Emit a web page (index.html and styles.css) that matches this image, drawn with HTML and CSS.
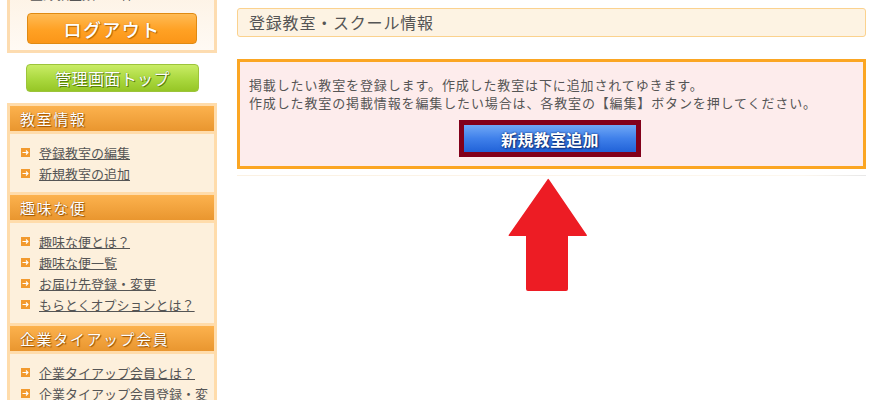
FILE: index.html
```html
<!DOCTYPE html>
<html lang="ja">
<head>
<meta charset="utf-8">
<title>登録教室・スクール情報</title>
<link rel="stylesheet" href="styles.css">
</head>
<body>
<div class="page">
  <aside class="side">
    <div class="login-box">
      <p class="count">登録教室数 ： 1件</p>
      <a class="btn-logout" href="#">ログアウト</a>
    </div>
    <a class="btn-top" href="#">管理画面トップ</a>
    <nav class="menu">
      <section class="menu-sec">
        <h2 class="menu-head">教室情報</h2>
        <ul class="menu-list">
          <li><svg class="ico" viewBox="0 0 9 9"><rect width="9" height="9" fill="#f29a2e"/><path d="M1.5 4.5H7M5 2.5L7 4.5L5 6.5" stroke="#fff" stroke-width="1.1" fill="none"/></svg><a href="#">登録教室の編集</a></li>
          <li><svg class="ico" viewBox="0 0 9 9"><rect width="9" height="9" fill="#f29a2e"/><path d="M1.5 4.5H7M5 2.5L7 4.5L5 6.5" stroke="#fff" stroke-width="1.1" fill="none"/></svg><a href="#">新規教室の追加</a></li>
        </ul>
      </section>
      <section class="menu-sec">
        <h2 class="menu-head">趣味な便</h2>
        <ul class="menu-list">
          <li><svg class="ico" viewBox="0 0 9 9"><rect width="9" height="9" fill="#f29a2e"/><path d="M1.5 4.5H7M5 2.5L7 4.5L5 6.5" stroke="#fff" stroke-width="1.1" fill="none"/></svg><a href="#">趣味な便とは？</a></li>
          <li><svg class="ico" viewBox="0 0 9 9"><rect width="9" height="9" fill="#f29a2e"/><path d="M1.5 4.5H7M5 2.5L7 4.5L5 6.5" stroke="#fff" stroke-width="1.1" fill="none"/></svg><a href="#">趣味な便一覧</a></li>
          <li><svg class="ico" viewBox="0 0 9 9"><rect width="9" height="9" fill="#f29a2e"/><path d="M1.5 4.5H7M5 2.5L7 4.5L5 6.5" stroke="#fff" stroke-width="1.1" fill="none"/></svg><a href="#">お届け先登録・変更</a></li>
          <li><svg class="ico" viewBox="0 0 9 9"><rect width="9" height="9" fill="#f29a2e"/><path d="M1.5 4.5H7M5 2.5L7 4.5L5 6.5" stroke="#fff" stroke-width="1.1" fill="none"/></svg><a href="#">もらとくオプションとは？</a></li>
        </ul>
      </section>
      <section class="menu-sec">
        <h2 class="menu-head">企業タイアップ会員</h2>
        <ul class="menu-list">
          <li><svg class="ico" viewBox="0 0 9 9"><rect width="9" height="9" fill="#f29a2e"/><path d="M1.5 4.5H7M5 2.5L7 4.5L5 6.5" stroke="#fff" stroke-width="1.1" fill="none"/></svg><a href="#">企業タイアップ会員とは？</a></li>
          <li><svg class="ico" viewBox="0 0 9 9"><rect width="9" height="9" fill="#f29a2e"/><path d="M1.5 4.5H7M5 2.5L7 4.5L5 6.5" stroke="#fff" stroke-width="1.1" fill="none"/></svg><a href="#">企業タイアップ会員登録・変更</a></li>
        </ul>
      </section>
    </nav>
  </aside>
  <main class="main">
    <h1 class="title">登録教室・スクール情報</h1>
    <div class="notice">
      <p class="notice-text">掲載したい教室を登録します。作成した教室は下に追加されてゆきます。<br>作成した教室の掲載情報を編集したい場合は、各教室の【編集】ボタンを押してください。</p>
      <div class="notice-act">
        <a class="btn-new" href="#"><span>新規教室追加</span></a>
      </div>
    </div>
    <div class="rule"></div>
    <svg class="arrow" width="80" height="114" viewBox="0 0 80 114"><path d="M39.5 1.5Q40 0 41 1.5L78.5 56.5Q79.5 58 78 58H60V111Q60 113 58 113H20Q18 113 18 111V58H1.5Q0 58 1 56.5Z" fill="#ed1c24"/></svg>
  </main>
</div>
</body>
</html>
```

FILE: styles.css
```css
* { box-sizing: border-box; }
html, body { margin: 0; padding: 0; background: #fff; }
body {
  font-family: "Noto Sans CJK JP", "Noto Sans", sans-serif;
  color: #555;
  overflow: hidden;
  height: 400px;
}
.page {
  display: flex;
  align-items: flex-start;
  padding-left: 7px;
  gap: 20px;
}
.side {
  width: 210px;
  flex: none;
  display: flex;
  flex-direction: column;
}
.login-box {
  margin-top: -15px;
  border: 3px solid #fddcb0;
  background: linear-gradient(#fdf2e4, #fffaf4);
  padding: 0 0 6px;
  display: flex;
  flex-direction: column;
  align-items: center;
}
.count {
  margin: -3px 0 0;
  align-self: flex-start;
  padding-left: 20px;
  font-size: 13px;
  line-height: 18px;
  color: #555;
}
.btn-logout {
  margin-top: 10px;
  width: 170px;
  height: 31px;
  border: 1px solid #e08a12;
  border-radius: 4px;
  background: linear-gradient(#ffbb55, #ffa124 55%, #fb9618);
  color: #fff;
  font-size: 18px;
  letter-spacing: 1.4px;
  font-weight: 500;
  text-decoration: none;
  display: flex;
  align-items: center;
  justify-content: center;
  text-shadow: 1px 1px 1px #b36400, 0 0 1px #b36400;
}
.btn-top {
  margin: 11px 0 0 19px;
  width: 173px;
  height: 28px;
  border: 1px solid #9cc43a;
  border-radius: 4px;
  background: linear-gradient(#c9ec66, #aad83e 55%, #96c626);
  color: #fff;
  font-size: 16px;
  letter-spacing: 0.4px;
  text-decoration: none;
  display: flex;
  align-items: center;
  justify-content: center;
  text-shadow: 1px 1px 0 #5a7f0c, 0 0 1px #5a7f0c;
}
.menu {
  margin-top: 11px;
  background: #ffdcab;
  padding: 3px;
  display: flex;
  flex-direction: column;
  gap: 3px;
}
.menu-head {
  margin: 0 0 3px;
  height: 25px;
  line-height: 25px;
  padding-left: 10px;
  font-size: 15px;
  font-weight: normal;
  letter-spacing: 1.6px;
  color: #fff;
  background: linear-gradient(#fcb24e, #e9962f);
  text-shadow: 1px 1px 1px #9a5200, 0 0 1px #9a5200;
}
.menu-list {
  list-style: none;
  margin: 0;
  padding: 8px 0 8px 11px;
  background: #fdf0dc;
}
.menu-list li {
  min-height: 21px;
  display: flex;
  align-items: flex-start;
  gap: 9px;
}
.ico { width: 9px; height: 9px; flex: none; display: block; margin-top: 6px; }
.menu-list a {
  color: #555;
  font-size: 13px;
  line-height: 21px;
  text-decoration: underline;
}
.main {
  width: 629px;
  flex: none;
  padding-top: 8px;
  display: flex;
  flex-direction: column;
}
.title {
  margin: 0;
  height: 29px;
  border: 1px solid #fbd28e;
  border-radius: 3px;
  background: #fdf3e3;
  padding-left: 11px;
  font-size: 16px;
  line-height: 27px;
  font-weight: normal;
  letter-spacing: 0.8px;
  color: #555;
}
.notice {
  margin-top: 22px;
  border: 3px solid #fba623;
  background: #fdecec;
  padding: 14px 0 9px 9px;
}
.notice-text {
  margin: 0;
  font-size: 13px;
  letter-spacing: 0.87px;
  line-height: 18px;
  color: #555;
}
.notice-act {
  margin-top: 8px;
  display: flex;
  justify-content: center;
  padding-right: 12px;
}
.btn-new {
  width: 182px;
  height: 37px;
  border: 5px solid #82001a;
  background: #82001a;
  text-decoration: none;
  display: block;
}
.btn-new span {
  display: flex;
  height: 100%;
  align-items: center;
  justify-content: center;
  background: linear-gradient(#70a8f6, #3f80ea 50%, #2162d8);
  color: #fff;
  font-size: 16px;
  font-weight: bold;
  letter-spacing: 0.3px;
  text-shadow: 1px 1px 2px #0a2a70, 0 0 2px #0a2a70;
}
.rule {
  margin-top: 6px;
  height: 1px;
  background: linear-gradient(90deg, #fbf1e2, #fdf7ee 90%, #e8e8e8);
}
.arrow {
  display: block;
  margin: 2px 0 0 271px;
}
```
